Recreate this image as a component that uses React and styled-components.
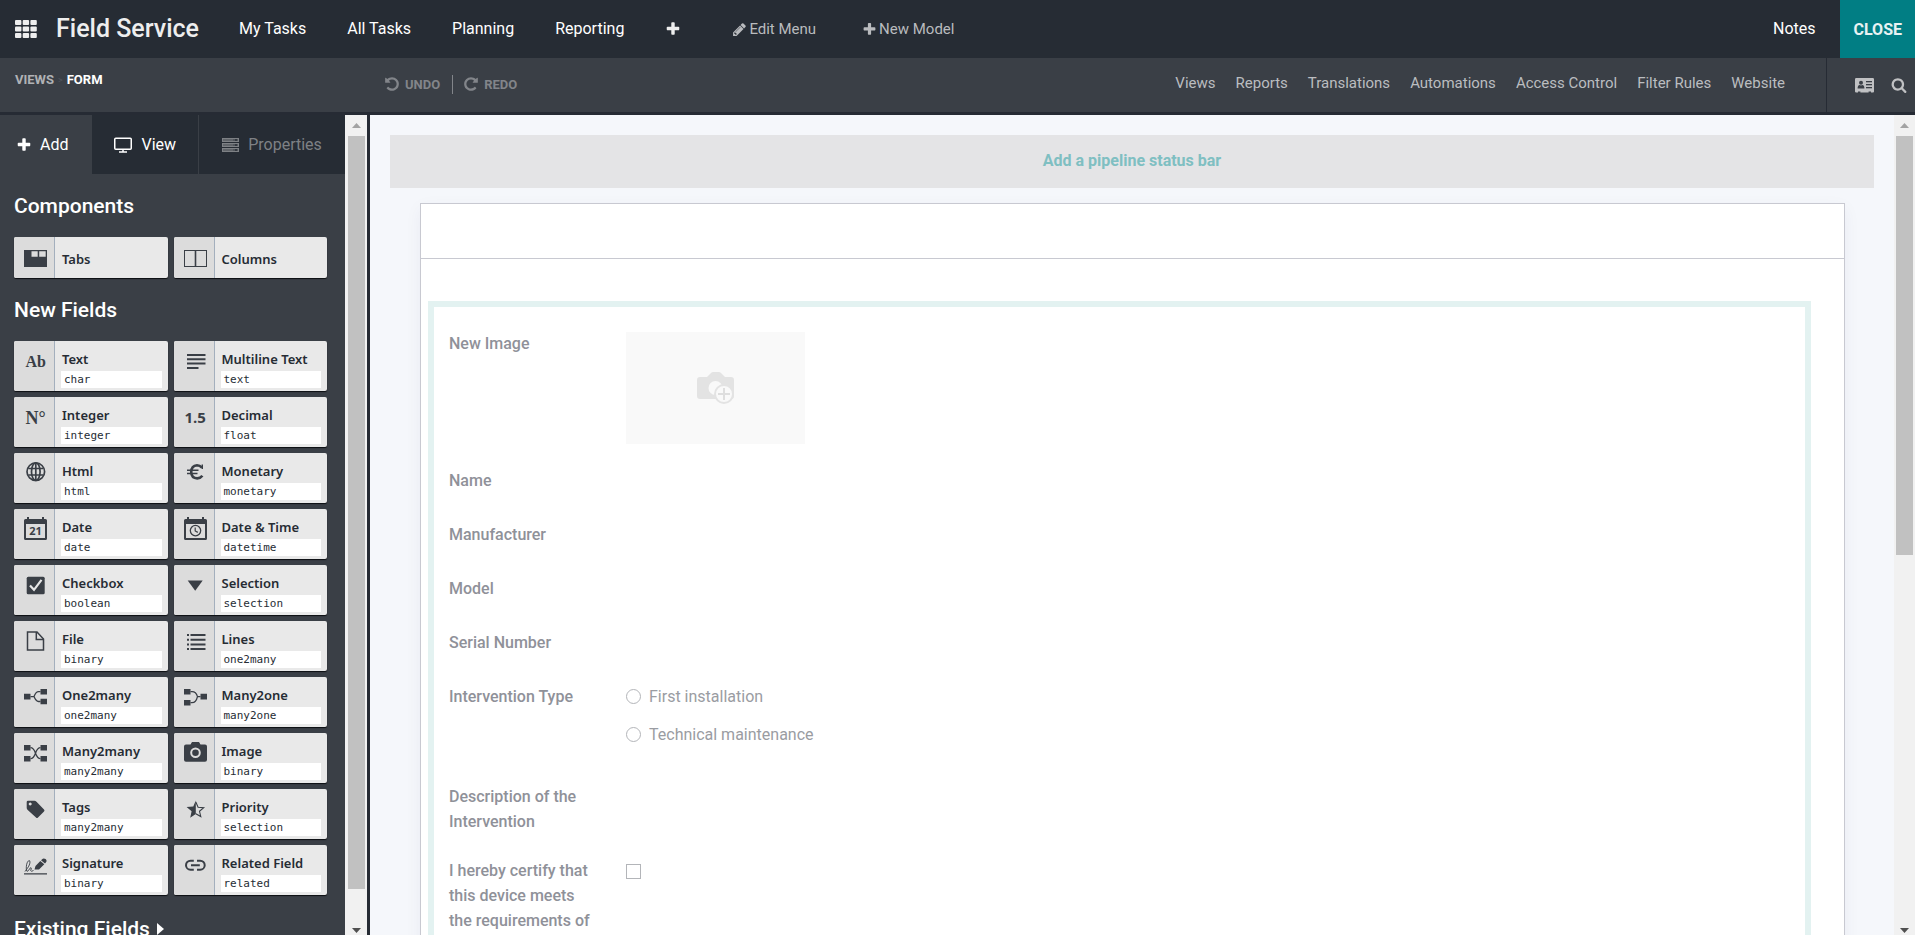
import React from 'react';
import styled, { createGlobalStyle } from 'styled-components';

const GlobalStyle = createGlobalStyle`
  * {
    box-sizing: border-box;
  }
  body {
    margin: 0;
    font-family: Roboto, sans-serif;
    font-size: 16px;
    line-height: 24px;
    background: #f5f7fb;
  }
  button {
    font-family: inherit;
    padding: 0;
    border: none;
    background: none;
    cursor: pointer;
  }
  a {
    color: inherit;
    text-decoration: none;
  }
`

// ---------- icons ----------

const glyphs = {
  plus: 'M1600 736v192q0 40-28 68t-68 28h-416v416q0 40-28 68t-68 28h-192q-40 0-68-28t-28-68v-416h-416q-40 0-68-28t-28-68v-192q0-40 28-68t68-28h416v-416q0-40 28-68t68-28h192q40 0 68 28t28 68v416h416q40 0 68 28t28 68z',
  pencil: 'M491 1536l91-91-235-235-91 91v107h128v128h107zm523-928q0-22-22-22-10 0-17 7l-542 542q-7 7-7 17 0 22 22 22 10 0 17-7l542-542q7-7 7-17zm-54-192l416 416-832 832h-416v-416zm683 96q0 53-37 90l-166 166-416-416 166-165q36-38 90-38 53 0 91 38l235 234q37 39 37 91z',
  search: 'M1216 832q0-185-131.5-316.5t-316.5-131.5-316.5 131.5-131.5 316.5 131.5 316.5 316.5 131.5 316.5-131.5 131.5-316.5zm512 832q0 52-38 90t-90 38q-54 0-90-38l-343-342q-179 124-399 124-143 0-273.5-55.5t-225-150-150-225-55.5-273.5 55.5-273.5 150-225 225-150 273.5-55.5 273.5 55.5 225 150 150 225 55.5 273.5q0 220-124 399l343 343q37 37 37 90z',
  undo: 'M1664 896q0 156-61 298t-164 245-245 164-298 61q-172 0-327-72.5t-264-204.5q-7-10-6.5-22.5t8.5-20.5l137-138q10-9 25-9 16 2 23 12 73 95 179 147t225 52q104 0 198.5-40.5t163.5-109.5 109.5-163.5 40.5-198.5-40.5-198.5-109.5-163.5-163.5-109.5-198.5-40.5q-98 0-188 35.5t-160 101.5l137 138q31 30 14 69-17 40-59 40h-448q-26 0-45-19t-19-45v-448q0-42 40-59 39-17 69 14l130 129q107-101 244.5-156.5t284.5-55.5q156 0 298 61t245 164 164 245 61 298z',
  redo: 'M1664 256v448q0 26-19 45t-45 19h-448q-42 0-59-40-17-39 14-69l138-138q-148-137-349-137-104 0-198.5 40.5t-163.5 109.5-109.5 163.5-40.5 198.5 40.5 198.5 109.5 163.5 163.5 109.5 198.5 40.5q119 0 225-52t179-147q7-10 23-12 15 0 25 9l137 138q9 8 9.5 20.5t-7.5 22.5q-109 132-264 204.5t-327 72.5q-156 0-298-61t-245-164-164-245-61-298 61-298 164-245 245-164 298-61q147 0 284.5 55.5t244.5 156.5l130-129q29-31 70-14 39 17 39 59z'
}

const Glyph = ({ name, size }) => (
  <svg width={size} height={size} viewBox="0 0 1792 1792" fill="currentColor" aria-hidden="true">
    <path d={glyphs[name]} />
  </svg>
)

const AppsIcon = () => (
  <svg width="22" height="18" viewBox="0 0 22 18" fill="currentColor" aria-hidden="true">
    {[0, 6.5, 13].map(y => [0, 7.7, 15.4].map(x => (
      <rect key={x + '-' + y} x={x} y={y} width="6.4" height="5" rx="1" />
    )))}
  </svg>
)

const CardIcon = () => (
  <svg width="19" height="15" viewBox="0 0 19 15" aria-hidden="true">
    <path fill="currentColor" d="M1.2 0h16.6q1.2 0 1.2 1.2v12.4q0 1-1 1h-2v-1.2h-2.4v1.2H5.4v-1.2H3v1.2H1.2q-1.2 0-1.2-1V1.2Q0 0 1.2 0z" />
    <g fill="#3a3f46">
      <circle cx="6" cy="4.8" r="2" />
      <path d="M2.6 10.6q0-3.6 2-3.6 1.4.8 2.8 0 2 0 2 3.6z" />
      <rect x="11" y="3" width="6" height="1.3" />
      <rect x="11" y="6" width="6" height="1.3" />
      <rect x="11" y="9" width="6" height="1.3" />
    </g>
  </svg>
)

const ScreenIcon = () => (
  <svg width="18" height="16" viewBox="0 0 18 16" fill="none" stroke="currentColor" aria-hidden="true">
    <rect x="0.75" y="1.25" width="16.5" height="11" rx="1" strokeWidth="1.5" />
    <path d="M9 12v2.5M5 15h8" strokeWidth="1.5" />
  </svg>
)

const ServerIcon = () => (
  <svg width="17" height="14" viewBox="0 0 17 14" aria-hidden="true">
    {[0, 5, 10].map(y => (
      <g key={y}>
        <rect x="0.5" y={y + 0.5} width="16" height="3" fill="currentColor" fillOpacity="0.5" stroke="currentColor" />
        <path d={`M1 ${y + 2}h10`} stroke="currentColor" strokeOpacity="0.7" />
        <circle cx="14" cy={y + 2} r="0.9" fill="#262c34" />
      </g>
    ))}
  </svg>
)

const CameraPlus = () => (
  <svg width="38" height="32" viewBox="0 0 38 32" aria-hidden="true">
    <path fill="#e3e3e3" d="M3 5h7l4-4q1-1 2-1h6q1 0 2 1l4 4h6q3 0 3 3v16q0 3-3 3H3q-3 0-3-3V8q0-3 3-3z" />
    <circle cx="18.5" cy="16" r="7" fill="#f9f9f9" />
    <circle cx="27" cy="22" r="9" fill="#f9f9f9" stroke="#e3e3e3" strokeWidth="2" />
    <path d="M27 16v12M21 22h12" stroke="#dedede" strokeWidth="2" />
  </svg>
)

const icons = {
  tabs: <g><rect y="7" width="23" height="17" /><path fill="#dcdcdc" d="M7.5 8.2h6.2v5.6H7.5zM15.2 8.2h6.5v5.6h-6.5z" /></g>,
  columns: <g fill="none" stroke="#3a3f46"><rect x="0.5" y="7.5" width="22" height="16" /><path strokeWidth="1.6" d="M11.5 7v17" /></g>,
  text: <text x="1.5" y="20" fontFamily="Liberation Serif, serif" fontWeight="700" fontSize="16">Ab</text>,
  lines: <path d="M3 7h18.5v2H3zM3 11.3h18.5v2H3zM3 15.6h18.5v2H3zM3 19.9h11.5v2H3z" />,
  integer: <text x="1.5" y="20.5" fontFamily="Liberation Serif, serif" fontWeight="700" fontSize="18">N°</text>,
  decimal: <text x="0.5" y="20" fontFamily="Open Sans, sans-serif" fontWeight="700" fontSize="15">1.5</text>,
  globe: (
    <g fill="none" stroke="#3a3f46" strokeWidth="1.7">
      <circle cx="11.8" cy="12.7" r="8.8" />
      <ellipse cx="11.8" cy="12.7" rx="4.3" ry="8.8" />
      <path d="M11.8 4v17.4M4.2 9.500h15.2M4.2 16h15.2" />
    </g>
  ),
  euro: (
    <g fill="none" stroke="#3a3f46">
      <path strokeWidth="2.6" d="M18 8.600Q15.800 6.300 13 6.300q-5.600.4-5.800 6.700.2 6.200 6 6.400 3.200-.1 5.200-2.700" />
      <path strokeWidth="1.5" d="M3 11.200h11.500M3 14.400h10.500" />
      <path strokeWidth="1.4" d="M18.300 5.500v4.500" />
    </g>
  ),
  date: (
    <g>
      <path fillRule="evenodd" d="M1.5 4H3V2h2v2h13V2h2v2h1.5Q23 4 23 5.5v18q0 1.5-1.5 1.5h-20Q0 25 0 23.5v-18Q0 4 1.5 4zM2 9v14h19V9z" />
      <text x="5.2" y="20" fontFamily="Open Sans, sans-serif" fontWeight="700" fontSize="11">21</text>
    </g>
  ),
  datetime: (
    <g>
      <path fillRule="evenodd" d="M1.5 4H3V2h2v2h13V2h2v2h1.5Q23 4 23 5.5v18q0 1.5-1.5 1.5h-20Q0 25 0 23.5v-18Q0 4 1.5 4zM2 9v14h19V9z" />
      <circle cx="11.5" cy="15.6" r="5.2" fill="none" stroke="#3a3f46" strokeWidth="1.3" />
      <path d="M11.2 12.5v3.5l2.6 1.4" fill="none" stroke="#3a3f46" strokeWidth="1.2" />
    </g>
  ),
  check: (
    <g>
      <rect x="2.7" y="5.7" width="18" height="17.6" rx="1.5" />
      <path d="M6 14.5l4 4.3 7.5-10" fill="none" stroke="#e6e6e6" strokeWidth="2.2" />
    </g>
  ),
  caret: <path d="M3.7 9.5h15L11.2 19.8z" />,
  file: (
    <g fill="none" stroke="#3a3f46" strokeWidth="1.5">
      <path d="M3.5 5h9.5l6.5 7v11h-16z" />
      <path d="M12.3 5v7.5h7.2" />
    </g>
  ),
  list: (
    <path d="M3 7h2v2H3zM6.5 7h15v2h-15zM3 11.7h2v2H3zM6.5 11.7h15v2h-15zM3 16.4h2v2H3zM6.5 16.4h15v2h-15zM3 21.1h2v2H3zM6.5 21.1h15v2h-15z" />
  ),
  one2many: (
    <g>
      <path d="M0 10.7h6.5v5.8H0zM16.5 6H23v5.5h-6.5zM16.5 15.7H23v5.5h-6.5z" />
      <path d="M6.5 13.6h3.5M16.5 8.7h-2q-2.5 0-4.5 4.9 2 4.9 4.5 4.9h2" fill="none" stroke="#3a3f46" strokeWidth="1.3" />
    </g>
  ),
  many2one: (
    <g>
      <path d="M0 6h6.5v5.5H0zM0 17h6.5v5.5H0zM16.5 10.8H23v5.6h-6.5z" />
      <path d="M6.5 8.7h1.5q4 0 5.5 4.9h3M6.5 19.7h1.5q4 0 5.5-6.1" fill="none" stroke="#3a3f46" strokeWidth="1.3" />
    </g>
  ),
  many2many: (
    <g>
      <path d="M0 6h6.5v5.5H0zM0 17h6.5v5.5H0zM16.5 6H23v5.5h-6.5zM16.5 17H23v5.5h-6.5z" />
      <path d="M6.5 8.7q3 0 5 5.5t5 5.5M6.5 19.7q3 0 5-5.5t5-5.5" fill="none" stroke="#3a3f46" strokeWidth="1.3" />
    </g>
  ),
  camera: (
    <g>
      <path d="M2 5.5h4.5L8 3h7l1.5 2.5H21q2 0 2 2v13.2q0 2-2 2H2q-2 0-2-2V7.5q0-2 2-2z" />
      <circle cx="11.5" cy="13.7" r="4.3" fill="none" stroke="#dcdcdc" strokeWidth="2" />
    </g>
  ),
  tag: <path fillRule="evenodd" d="M4 5.7h6.5q1 0 2 1l7.5 7.7q1 1 0 2l-6 6q-1 1-2 0L3.7 15q-1-1-1-2V7q0-1.3 1.3-1.3zM6.2 7.6a1.5 1.5 0 1 0 .01 0z" />,
  star: (
    <g>
      <path d="M11.8 5.5V19l-5.6 3.7 1.4-6.4-5-4.3 6.7-.6z" />
      <path d="M11.8 7l2.3 5.2 5.6.5-4.2 3.6 1.3 5.3-5-2.8" fill="none" stroke="#3a3f46" strokeWidth="1.1" />
    </g>
  ),
  signature: (
    <g>
      <path d="M0 22.3h23v1.2H0z" />
      <path d="M10.5 18.5l1-3.500 4.800-5 4 3.300-5.300 5.200zM17 9.300l1.800-1.600q1.300-.8 2.800.4 1.500 1.300.8 2.700L21 12.600z" />
      <path d="M1 20.5q5-6 5-9.500 0-2-1.500-1.200Q2 12 2.300 19q.4 2.500 2.200.5 1.500-3 2.500-2.800 1 .7-.4 2.800.6 1.500 2.900 0" fill="none" stroke="#3a3f46" strokeWidth="0.9" />
    </g>
  ),
  link: (
    <g fill="none" stroke="#3a3f46" strokeWidth="2">
      <path d="M9.8 9.7H6.5a4.5 4.5 0 0 0 0 9h3.300M13 9.7h3.2a4.5 4.5 0 0 1 0 9H13M7 14.2h8.8" />
    </g>
  )
}

// ---------- layout ----------

const Page = styled.div`
  display: flex;
  flex-direction: column;
  height: 100vh;
  overflow: hidden;
`

const Navbar = styled.header`
  display: flex;
  align-items: center;
  flex: none;
  height: 58px;
  padding-left: 15px;
  background: #262c34;
  color: #fff;
`

const AppsButton = styled.button`
  display: flex;
  color: #eee;
`

const Brand = styled.a`
  margin: 0 40px 0 19px;
  font-size: 25px;
  font-weight: 500;
  color: #eee;
`

const Menu = styled.nav`
  display: flex;
  align-items: center;
  flex: 1;
  gap: 41px;
`

const StudioLink = styled.button`
  display: flex;
  align-items: center;
  gap: 2px;
  margin-left: ${props => props.$first ? '10px' : '5px'};
  font-size: 15px;
  color: #b9bbbe;
`

const IconButton = styled.button`
  display: flex;
  color: ${props => props.$color || '#eee'};
`

const CloseButton = styled.button`
  align-self: stretch;
  margin-left: 25px;
  padding: 0 13px;
  background: #017e84;
  color: #e8f2f3;
  font-size: 16px;
  font-weight: 700;
`

const SubBar = styled.div`
  display: flex;
  flex: none;
  height: 57px;
  border-bottom: 3px solid #262b34;
  background: #3a3f46;
  color: #bbbdc0;
`

const Crumbs = styled.nav`
  display: flex;
  width: 370px;
  padding: 10px 0 0 15px;
  font-size: 13px;
  font-weight: 700;
  gap: 4px;
`

const Crumb = styled.a`
  color: ${props => props.$active ? '#fff' : '#b0b2b5'};
`

const Separator = styled.span`
  font-weight: 400;
  font-size: 9px;
  color: #50555d;
`

const History = styled.div`
  display: flex;
  flex: 1;
  align-items: center;
  padding: 0 0 2px 14px;
`

const HistoryButton = styled.button`
  display: flex;
  align-items: center;
  gap: 5px;
  font-size: 13px;
  line-height: 19px;
  font-weight: 700;
  color: #82858a;
  & + & {
    margin-left: 12px;
    padding-left: 10px;
    border-left: 1px solid #82858a;
  }
`

const StudioMenu = styled.nav`
  display: flex;
  gap: 20px;
  padding: 13px 41px 0 0;
  font-size: 15px;
`

const Tools = styled.div`
  display: flex;
  align-items: center;
  gap: 17px;
  padding: 0 8px 0 28px;
  border-left: 1px solid #262b34;
`

const Main = styled.div`
  display: flex;
  flex: 1;
  min-height: 0;
`

const Sidebar = styled.aside`
  display: flex;
  flex: none;
  width: 370px;
  border-right: 3px solid #262b34;
  background: #3a3f46;
`

const SidebarBody = styled.div`
  flex: 1;
  overflow: hidden;
`

const TabList = styled.div`
  display: flex;
  height: 59px;
  background: #262c34;
`

const Tab = styled.button`
  display: flex;
  flex: ${props => props.$grow ? '1' : 'none'};
  align-items: center;
  justify-content: center;
  gap: ${props => props.$active ? '8px' : '9px'};
  padding: 0 ${props => props.$active ? '24px 0 16px' : '22px'};
  font-size: 16px;
  color: ${props => props.disabled ? '#7e8185' : '#fff'};
  background: ${props => props.$active ? '#3a3f46' : 'transparent'};
  border-left: ${props => props.$grow ? '1px solid #3a3f46' : 'none'};
`

const Panel = styled.div`
  padding: 20px 18px 0 14px;
`

const Heading = styled.h3`
  margin: 0;
  font-size: 21px;
  line-height: 24px;
  font-weight: 500;
  color: #fff;
`

const CardGrid = styled.div`
  display: grid;
  grid-template-columns: 1fr 1fr;
  gap: 6px;
  margin: 19px 0 20px;
`

const Card = styled.button`
  display: flex;
  height: ${props => props.$small ? '41px' : '50px'};
  overflow: hidden;
  border-radius: 2px;
  background: #e9e9e9;
  box-shadow: 0 1px 1px #0c0e11;
  text-align: left;
`

const CardSymbol = styled.span`
  align-self: stretch;
  flex: none;
  width: 41px;
  padding: 6px 0 0 10px;
  border-right: 1px solid #a3afbd;
  background: #dcdcdc;
`

const CardText = styled.span`
  display: flex;
  flex-direction: column;
  justify-content: ${props => props.$small ? 'center' : 'flex-start'};
  align-self: stretch;
  flex: 1;
  padding: ${props => props.$small ? '2px 6px 0' : '9px 6px 0'};
`

const CardName = styled.span`
  padding-left: 1px;
  font-family: "Noto Sans", "Open Sans", sans-serif;
  font-size: 13px;
  line-height: 18px;
  font-weight: 600;
  color: #262c34;
`

const CardType = styled.span`
  margin-top: 3px;
  padding-left: 3px;
  font-family: "DejaVu Sans Mono", monospace;
  font-size: 11px;
  line-height: 17px;
  color: #262c34;
  background: #fff;
`

const Existing = styled.button`
  display: flex;
  align-items: center;
  gap: 7px;
  margin-top: 22px;
`

const ScrollBar = styled.div`
  display: flex;
  flex-direction: column;
  flex: none;
  width: ${props => props.$width};
  padding: 0 2px 0 ${props => props.$inset};
  background: #f1f1f1;
`

const ScrollArrow = styled.span`
  display: flex;
  align-items: center;
  justify-content: center;
  flex: none;
  height: ${props => props.$down ? '10px' : '21px'};
  color: ${props => props.$down ? '#505050' : '#a3a3a3'};
`

const ScrollTrack = styled.div`
  flex: 1;
  padding-bottom: 13px;
`

const ScrollThumb = styled.div`
  height: ${props => props.$size};
  background: #c1c1c1;
`

const Content = styled.main`
  flex: 1;
  min-width: 0;
  padding: 20px 20px 0;
  overflow: hidden;
`

const StatusBar = styled.button`
  display: block;
  width: 100%;
  height: 53px;
  padding-bottom: 2px;
  background: #e4e4e6;
  color: #7fbfc2;
  font-size: 16px;
  font-weight: 700;
`

const Sheet = styled.section`
  height: 100%;
  margin: 15px 29px 0 30px;
  border: 1px solid #c8c9d1;
  background: #fff;
  box-shadow: 0 5px 16px rgba(40, 40, 90, 0.05);
`

const ButtonBox = styled.div`
  height: 55px;
  border-bottom: 1px solid #c8c9d1;
`

const Group = styled.div`
  display: grid;
  grid-template-columns: 150px 1fr;
  grid-auto-rows: min-content;
  gap: 24px 27px;
  height: 100%;
  margin: 42px 33px 0 7px;
  padding: 24px 15px;
  border: 6px solid #e3f2f1;
  line-height: 25px;
  color: #9a9ca2;
`

const FieldLabel = styled.label`
  min-height: 30px;
  font-weight: 500;
  color: #8f9199;
`

const ImageBox = styled.button`
  display: flex;
  align-items: center;
  justify-content: center;
  width: 179px;
  height: 112px;
  margin: 1px 0 0;
  background: #f9f9f9;
`

const Option = styled.label`
  display: flex;
  align-items: center;
  gap: 8px;
  margin-bottom: 13px;
`

const Choice = styled.input`
  appearance: none;
  width: 15px;
  height: 15px;
  margin: 0;
  border: 1px solid #b3b5b9;
  border-radius: ${props => props.type === 'radio' ? '50%' : '0'};
  background: #fff;
`

const CheckCell = styled.div`
  display: flex;
  align-items: center;
  height: 26px;
`

const menuItems = ['My Tasks', 'All Tasks', 'Planning', 'Reporting']

const studioItems = ['Views', 'Reports', 'Translations', 'Automations', 'Access Control', 'Filter Rules', 'Website']

const components = [
  ['tabs', 'Tabs'],
  ['columns', 'Columns']
]

const fields = [
  ['text', 'Text', 'char'],
  ['lines', 'Multiline Text', 'text'],
  ['integer', 'Integer', 'integer'],
  ['decimal', 'Decimal', 'float'],
  ['globe', 'Html', 'html'],
  ['euro', 'Monetary', 'monetary'],
  ['date', 'Date', 'date'],
  ['datetime', 'Date & Time', 'datetime'],
  ['check', 'Checkbox', 'boolean'],
  ['caret', 'Selection', 'selection'],
  ['file', 'File', 'binary'],
  ['list', 'Lines', 'one2many'],
  ['one2many', 'One2many', 'one2many'],
  ['many2one', 'Many2one', 'many2one'],
  ['many2many', 'Many2many', 'many2many'],
  ['camera', 'Image', 'binary'],
  ['tag', 'Tags', 'many2many'],
  ['star', 'Priority', 'selection'],
  ['signature', 'Signature', 'binary'],
  ['link', 'Related Field', 'related']
]

const FieldCard = ({ icon, name, type }) => (
  <Card $small={!type}>
    <CardSymbol>
      <svg width="24" height="26" viewBox="0 0 24 26" fill="#3a3f46" aria-hidden="true">{icons[icon]}</svg>
    </CardSymbol>
    <CardText $small={!type}>
      <CardName>{name}</CardName>
      {type && <CardType>{type}</CardType>}
    </CardText>
  </Card>
)

const Scroller = ({ size, width, inset }) => (
  <ScrollBar $width={width} $inset={inset} aria-hidden="true">
    <ScrollArrow>
      <svg width="9" height="5" viewBox="0 0 9 5" fill="currentColor"><path d="M0 5L4.5 0 9 5z" /></svg>
    </ScrollArrow>
    <ScrollTrack>
      <ScrollThumb $size={size} />
    </ScrollTrack>
    <ScrollArrow $down>
      <svg width="9" height="5" viewBox="0 0 9 5" fill="currentColor"><path d="M0 0L4.5 5 9 0z" /></svg>
    </ScrollArrow>
  </ScrollBar>
)

const App = () => {
  return (
    <Page>
      <GlobalStyle />
      <Navbar>
        <AppsButton aria-label="Applications"><AppsIcon /></AppsButton>
        <Brand href="#">Field Service</Brand>
        <Menu>
          {menuItems.map(item => <a href="#" key={item}>{item}</a>)}
          <IconButton aria-label="Add menu"><Glyph name="plus" size={16} /></IconButton>
          <StudioLink $first><Glyph name="pencil" size={15} />Edit Menu</StudioLink>
          <StudioLink><Glyph name="plus" size={15} />New Model</StudioLink>
        </Menu>
        <a href="#">Notes</a>
        <CloseButton>CLOSE</CloseButton>
      </Navbar>

      <SubBar>
        <Crumbs>
          <Crumb href="#">VIEWS</Crumb>
          <Separator>&gt;</Separator>
          <Crumb href="#" $active>FORM</Crumb>
        </Crumbs>
        <History>
          <HistoryButton><Glyph name="undo" size={16} />UNDO</HistoryButton>
          <HistoryButton><Glyph name="redo" size={16} />REDO</HistoryButton>
        </History>
        <StudioMenu>
          {studioItems.map(item => <a href="#" key={item}>{item}</a>)}
        </StudioMenu>
        <Tools>
          <IconButton aria-label="Form view" $color="#c0c1c3"><CardIcon /></IconButton>
          <IconButton aria-label="Search view" $color="#c0c1c3"><Glyph name="search" size={16} /></IconButton>
        </Tools>
      </SubBar>

      <Main>
        <Sidebar>
          <SidebarBody>
            <TabList>
              <Tab $active><Glyph name="plus" size={16} />Add</Tab>
              <Tab><ScreenIcon />View</Tab>
              <Tab $grow disabled><ServerIcon />Properties</Tab>
            </TabList>
            <Panel>
              <Heading>Components</Heading>
              <CardGrid>
                {components.map(([icon, name]) => <FieldCard key={name} icon={icon} name={name} />)}
              </CardGrid>
              <Heading>New Fields</Heading>
              <CardGrid>
                {fields.map(([icon, name, type]) => <FieldCard key={name} icon={icon} name={name} type={type} />)}
              </CardGrid>
              <Existing>
                <Heading as="span">Existing Fields</Heading>
                <svg width="7" height="12" viewBox="0 0 7 12" fill="#fff" aria-hidden="true"><path d="M0 0l7 6-7 6z" /></svg>
              </Existing>
            </Panel>
          </SidebarBody>
          <Scroller size="97%" width="22px" inset="3px" />
        </Sidebar>

        <Content>
          <StatusBar>Add a pipeline status bar</StatusBar>
          <Sheet>
            <ButtonBox />
            <Group>
              <FieldLabel as="span">New Image</FieldLabel>
              <ImageBox aria-label="New Image"><CameraPlus /></ImageBox>
              <FieldLabel as="span">Name</FieldLabel>
              <span />
              <FieldLabel as="span">Manufacturer</FieldLabel>
              <span />
              <FieldLabel as="span">Model</FieldLabel>
              <span />
              <FieldLabel as="span">Serial Number</FieldLabel>
              <span />
              <FieldLabel as="span" id="intervention">Intervention Type</FieldLabel>
              <div role="radiogroup" aria-labelledby="intervention">
                <Option><Choice type="radio" name="intervention" />First installation</Option>
                <Option><Choice type="radio" name="intervention" />Technical maintenance</Option>
              </div>
              <FieldLabel as="span">Description of the Intervention</FieldLabel>
              <span />
              <FieldLabel htmlFor="certify">I hereby certify that this device meets the requirements of</FieldLabel>
              <CheckCell><Choice type="checkbox" id="certify" /></CheckCell>
            </Group>
          </Sheet>
        </Content>
        <Scroller size="54%" width="21px" inset="2px" />
      </Main>
    </Page>
  )
}

export default App;
